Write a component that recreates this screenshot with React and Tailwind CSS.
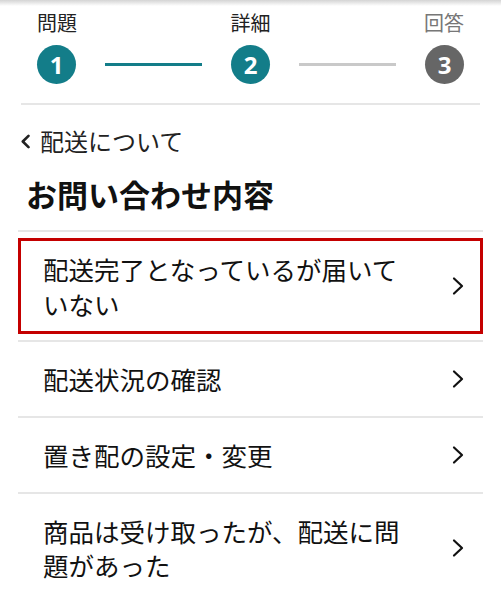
import React from "react";

const jp = { fontFamily: '"Noto Sans CJK JP", "Noto Sans", sans-serif' };

function ChevronRight() {
  return (
    <svg width="12" height="20" viewBox="0 0 12 20" fill="none" className="shrink-0">
      <path d="M2 2.5L10 10L2 17.5" stroke="#111" strokeWidth="2.2" strokeLinecap="round" strokeLinejoin="round" />
    </svg>
  );
}

const items = [
  { label: "配送状況の確認" },
  { label: "置き配の設定・変更" },
  { label: "商品は受け取ったが、配送に問題があった" },
];

export default function App() {
  return (
    <div className="w-[501px] h-[595px] overflow-hidden bg-white text-[#111]" style={jp}>
      <div className="h-[6px] bg-gradient-to-b from-[#d4d4d4] to-white" />

      {/* stepper */}
      <div className="px-[37px] pt-[7px]">
        <div className="flex justify-between text-[20px] leading-[20px]">
          <span className="text-[#222]">問題</span>
          <span className="text-[#222]">詳細</span>
          <span className="text-[#777]">回答</span>
        </div>
        <div className="flex items-center mt-[12px]">
          <div className="w-[39px] h-[39px] rounded-full bg-[#137d89] text-white flex items-center justify-center text-[24px] font-bold" style={{ fontFamily: '"Open Sans", sans-serif' }}>1</div>
          <div className="flex-1 mx-[29px] h-[3px] bg-[#137d89]" />
          <div className="w-[39px] h-[39px] rounded-full bg-[#137d89] text-white flex items-center justify-center text-[24px] font-bold" style={{ fontFamily: '"Open Sans", sans-serif' }}>2</div>
          <div className="flex-1 mx-[29px] h-[3px] bg-[#c9c9c9]" />
          <div className="w-[39px] h-[39px] rounded-full bg-[#666] text-white flex items-center justify-center text-[24px] font-bold" style={{ fontFamily: '"Open Sans", sans-serif' }}>3</div>
        </div>
      </div>

      <div className="mx-[21px] mt-[19px] h-[2px] bg-[#e6e6e6]" />

      {/* back link */}
      <div className="flex items-center gap-[9px] pl-[20px] mt-[21px]">
        <svg width="11" height="15" viewBox="0 0 11 15" fill="none">
          <path d="M8.5 1.8L2.8 7.5L8.5 13.2" stroke="#222" strokeWidth="2.6" strokeLinecap="round" strokeLinejoin="round" />
        </svg>
        <span className="text-[24px] leading-[30px] text-[#222]">配送について</span>
      </div>

      <h1 className="pl-[26px] mt-[20px] text-[31px] leading-[36px] font-bold">お問い合わせ内容</h1>

      {/* list */}
      <div className="mx-[18px] mt-[18px]">
        <div className="border-t-2 border-[#e6e6e6] py-[6px]">
          <div className="border-[3px] border-[#c40000] flex items-center pl-[22px] pr-[16px] py-[10px]">
            <span className="flex-1 pr-[40px] text-[25.5px] leading-[35px]">配送完了となっているが届いていない</span>
            <ChevronRight />
          </div>
        </div>
        {items.map((it) => (
          <div key={it.label} className="border-t-2 border-[#e6e6e6] flex items-center pl-[25px] pr-[19px] py-[20px]">
            <span className="flex-1 pr-[40px] text-[25.5px] leading-[34px]">{it.label}</span>
            <ChevronRight />
          </div>
        ))}
      </div>
    </div>
  );
}
